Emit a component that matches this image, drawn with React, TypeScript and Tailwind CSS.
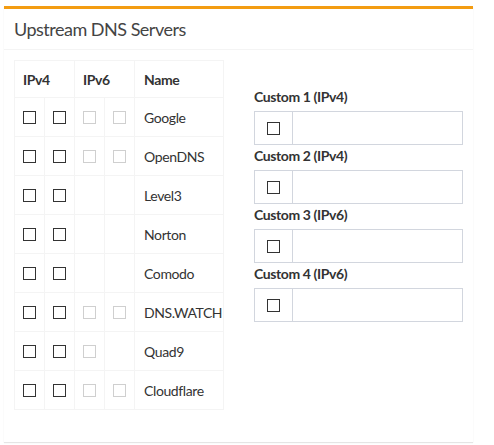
import React from "react";

const F = { fontFamily: '"Source Sans Pro", Lato, "Liberation Sans", sans-serif' };

function Box({ disabled }: { disabled?: boolean }) {
  return (
    <span
      className={
        "inline-block w-[13px] h-[13px] border bg-white align-middle " +
        (disabled ? "border-[#cfcfcf]" : "border-[#333333]")
      }
    />
  );
}

type Row = { name: string; v6: number };
const rows: Row[] = [
  { name: "Google", v6: 2 },
  { name: "OpenDNS", v6: 2 },
  { name: "Level3", v6: 0 },
  { name: "Norton", v6: 0 },
  { name: "Comodo", v6: 0 },
  { name: "DNS.WATCH", v6: 2 },
  { name: "Quad9", v6: 1 },
  { name: "Cloudflare", v6: 2 },
];

export default function App() {
  return (
    <div className="w-[494px] h-[445px] bg-white text-[#333333]" style={F}>
      <div className="pt-[6px] pl-[4px]">
        <div className="w-[469px] h-[436px] border-t-[3px] border-[#f39c12] bg-white shadow-[0_1px_1px_rgba(0,0,0,0.1)] flex flex-col">
          <div className="h-[41px] border-b border-[#f4f4f4] px-[10px] flex items-center">
            <h3 className="text-[18px] leading-none text-[#444444] m-0 tracking-[-0.5px]">Upstream DNS Servers</h3>
          </div>
          <div className="flex px-[10px] pt-[10px]">
            <div className="w-[240px] shrink-0">
              <table className="border-collapse text-[14px] table-fixed w-[209px] tracking-[-0.4px]">
                <colgroup>
                  <col className="w-[30px]" />
                  <col className="w-[30px]" />
                  <col className="w-[30px]" />
                  <col className="w-[30px]" />
                  <col className="w-[89px]" />
                </colgroup>
                <thead>
                  <tr className="h-[37px]">
                    <th colSpan={2} className="border border-[#f4f4f4] text-left font-bold px-[8px]">IPv4</th>
                    <th colSpan={2} className="border border-[#f4f4f4] text-left font-bold px-[8px]">IPv6</th>
                    <th className="border border-[#f4f4f4] text-left font-bold px-[9px]">Name</th>
                  </tr>
                </thead>
                <tbody>
                  {rows.map((r) => (
                    <tr key={r.name} className="h-[39px]">
                      <td className="border border-[#f4f4f4] px-[8px] leading-none"><Box /></td>
                      <td className="border border-[#f4f4f4] px-[8px] leading-none"><Box /></td>
                      <td className="border border-[#f4f4f4] px-[8px] leading-none">{r.v6 >= 1 ? <Box disabled /> : null}</td>
                      <td className="border border-[#f4f4f4] px-[8px] leading-none">{r.v6 >= 2 ? <Box disabled /> : null}</td>
                      <td className="border border-[#f4f4f4] px-[9px] whitespace-nowrap">{r.name}</td>
                    </tr>
                  ))}
                </tbody>
              </table>
            </div>
            <div className="pt-[28px] w-[209px]">
              {["Custom 1 (IPv4)", "Custom 2 (IPv4)", "Custom 3 (IPv6)", "Custom 4 (IPv6)"].map((l, i) => (
                <div key={l}>
                  <div className={"text-[14px] font-bold leading-[18px] tracking-[-0.4px] " + (i === 0 ? "mb-[5px]" : "mb-[5px] mt-[2px]")}>{l}</div>
                  <div className="h-[34px] border border-[#d2d6de] flex">
                    <div className="w-[38px] border-r border-[#d2d6de] flex items-center justify-center">
                      <Box />
                    </div>
                    <div className="flex-1" />
                  </div>
                </div>
              ))}
            </div>
          </div>
        </div>
      </div>
    </div>
  );
}
